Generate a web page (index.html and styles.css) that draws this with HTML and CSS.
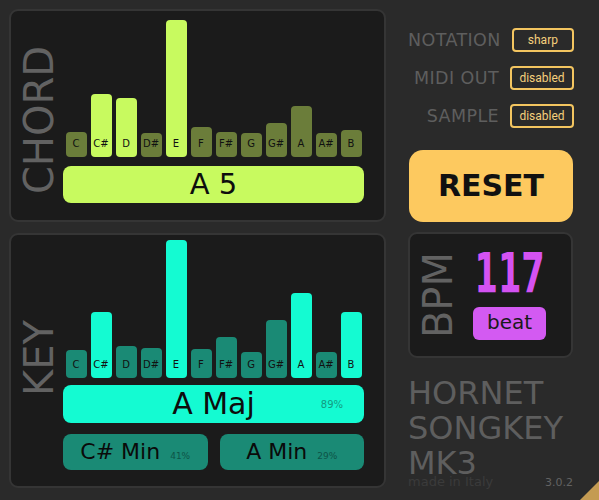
FILE: index.html
```html
<!DOCTYPE html>
<html>
<head>
<meta charset="utf-8">
<link rel="stylesheet" href="styles.css">
</head>
<body>
<div class="app">
  <div class="left">
    <section class="panel chord">
      <div class="side"><span class="vlabel">CHORD</span></div>
      <div class="content">
        <div class="bars">
          <div class="bar off" style="height:25px"><span>C</span></div>
          <div class="bar on" style="height:63px"><span>C#</span></div>
          <div class="bar on" style="height:59px"><span>D</span></div>
          <div class="bar off" style="height:24px"><span>D#</span></div>
          <div class="bar on" style="height:137px"><span>E</span></div>
          <div class="bar off" style="height:30px"><span>F</span></div>
          <div class="bar off" style="height:25px"><span>F#</span></div>
          <div class="bar off" style="height:24px"><span>G</span></div>
          <div class="bar off" style="height:34px"><span>G#</span></div>
          <div class="bar off" style="height:51px"><span>A</span></div>
          <div class="bar off" style="height:24px"><span>A#</span></div>
          <div class="bar off" style="height:27px"><span>B</span></div>
        </div>
        <div class="result chord-result">A 5</div>
      </div>
    </section>
    <section class="panel key">
      <div class="side"><span class="vlabel">KEY</span></div>
      <div class="content">
        <div class="bars">
          <div class="bar off" style="height:28px"><span>C</span></div>
          <div class="bar on" style="height:66px"><span>C#</span></div>
          <div class="bar off" style="height:32px"><span>D</span></div>
          <div class="bar off" style="height:30px"><span>D#</span></div>
          <div class="bar on" style="height:138px"><span>E</span></div>
          <div class="bar off" style="height:29px"><span>F</span></div>
          <div class="bar off" style="height:41px"><span>F#</span></div>
          <div class="bar off" style="height:26px"><span>G</span></div>
          <div class="bar off" style="height:58px"><span>G#</span></div>
          <div class="bar on" style="height:85px"><span>A</span></div>
          <div class="bar off" style="height:26px"><span>A#</span></div>
          <div class="bar on" style="height:66px"><span>B</span></div>
        </div>
        <div class="result key-result">
          <span></span>
          <span class="name">A Maj</span>
          <span class="pct">89%</span>
        </div>
        <div class="alts">
          <div class="alt"><span class="name">C# Min</span><span class="pct">41%</span></div>
          <div class="alt"><span class="name">A Min</span><span class="pct">29%</span></div>
        </div>
      </div>
    </section>
  </div>
  <div class="right">
    <div class="settings">
      <div class="row"><span class="lbl">NOTATION</span><span class="btn">sharp</span></div>
      <div class="row"><span class="lbl">MIDI OUT</span><span class="btn">disabled</span></div>
      <div class="row"><span class="lbl">SAMPLE</span><span class="btn">disabled</span></div>
    </div>
    <div class="reset">RESET</div>
    <div class="bpm">
      <div class="bpm-side"><span class="vlabel">BPM</span></div>
      <div class="bpm-main">
        <div class="tempo">117</div>
        <div class="beat">beat</div>
      </div>
    </div>
    <div class="brand">HORNET<br>SONGKEY<br>MK3</div>
    <div class="foot"><span class="made">made in Italy</span><span class="ver">3.0.2</span></div>
  </div>
</div>
<svg class="grip" width="20" height="20" viewBox="0 0 20 20"><polygon points="20,1 20,20 1,20" fill="#c49b52"/></svg>
</body>
</html>
```

FILE: styles.css
```css
html, body {
  margin: 0;
  padding: 0;
}
body {
  width: 599px;
  height: 500px;
  background: #2a2a2a;
  font-family: "DejaVu Sans", sans-serif;
  overflow: hidden;
  position: relative;
}
.app {
  display: flex;
  padding: 9px 0 0 9px;
  gap: 22px;
}
.left {
  display: flex;
  flex-direction: column;
  gap: 11px;
  width: 377px;
}
.panel {
  box-sizing: border-box;
  background: #1b1b1b;
  border: 2px solid #353535;
  border-radius: 9px;
  display: flex;
}
.chord {
  height: 213px;
  padding: 9px 20px 17px 0;
}
.key {
  height: 255px;
  padding: 5px 20px 16px 0;
}
.side {
  width: 47px;
  padding-left: 5px;
  display: flex;
  align-items: center;
  justify-content: center;
}
.chord .side {
  padding-top: 18px;
}
.key .side {
  padding-top: 6px;
}
.vlabel {
  writing-mode: vertical-rl;
  transform: rotate(180deg);
  font-size: 40px;
  line-height: 29px;
  color: #626262;
}
.content {
  width: 301px;
  display: flex;
  flex-direction: column;
}
.bars {
  display: flex;
  justify-content: center;
  align-items: flex-end;
  gap: 4px;
}
.chord .bars { height: 137px; }
.key .bars { height: 138px; }
.bar {
  width: 21px;
  border-radius: 4px;
  box-sizing: border-box;
  display: flex;
  align-items: flex-end;
  justify-content: center;
  padding-bottom: 7px;
  font-size: 10px;
  line-height: 12px;
  color: #111;
  white-space: nowrap;
}
.chord .on { background: #c8fa5f; }
.chord .off { background: #6b7d3a; }
.key .on { background: #14fbd2; }
.key .off { background: #1a8a75; }
.result {
  border-radius: 8px;
  color: #0d0d0d;
}
.chord-result {
  margin-top: 9px;
  height: 37px;
  background: #c8fa5f;
  font-size: 29px;
  line-height: 37px;
  text-align: center;
}
.key-result {
  margin-top: 7px;
  height: 38px;
  background: #14fbd2;
  display: grid;
  grid-template-columns: 1fr auto 1fr;
  align-items: center;
}
.key-result .name {
  font-size: 30px;
  line-height: 38px;
}
.key-result .pct {
  justify-self: end;
  margin-right: 21px;
  font-size: 10px;
  color: #129a80;
}
.alts {
  margin-top: 11px;
  display: flex;
  gap: 12px;
}
.alt {
  flex: 1;
  height: 36px;
  background: #1a8a75;
  border-radius: 8px;
  display: flex;
  align-items: baseline;
  justify-content: center;
  gap: 10px;
  line-height: 36px;
}
.alt .name {
  font-size: 22px;
  color: #0a0a0a;
}
.alt .pct {
  font-size: 9px;
  color: #0d5447;
}
.right {
  width: 166px;
  display: flex;
  flex-direction: column;
}
.settings {
  margin-top: 19px;
  display: flex;
  flex-direction: column;
  gap: 14px;
}
.row {
  display: flex;
  justify-content: flex-end;
  align-items: center;
  gap: 11px;
}
.lbl {
  font-size: 17.5px;
  color: #5e5e5e;
  letter-spacing: 0.4px;
}
.btn {
  box-sizing: border-box;
  width: 64px;
  height: 24px;
  border: 2px solid #f3c560;
  border-radius: 4px;
  color: #f5d07c;
  font-family: Roboto, sans-serif;
  font-size: 12px;
  line-height: 20px;
  text-align: center;
}
.reset {
  margin: 22px 1px 0 1px;
  height: 72px;
  background: #fdc95f;
  border-radius: 14px;
  font-size: 30px;
  font-weight: bold;
  line-height: 72px;
  text-align: center;
  color: #111;
}
.bpm {
  box-sizing: border-box;
  margin-top: 10px;
  width: 165px;
  height: 126px;
  background: #1b1b1b;
  border: 2px solid #353535;
  border-radius: 9px;
  display: flex;
  padding: 0 5px 0 14px;
}
.bpm-side {
  display: flex;
  align-items: center;
}
.bpm-main {
  flex: 1;
  display: flex;
  flex-direction: column;
  align-items: center;
  justify-content: center;
  padding-bottom: 6px;
}
.tempo {
  font-family: "DejaVu Sans Condensed", "DejaVu Sans", sans-serif;
  font-weight: bold;
  font-size: 55px;
  line-height: 56px;
  color: #d452f2;
  transform: scaleX(0.68);
}
.beat {
  margin-top: 6px;
  width: 73px;
  height: 33px;
  background: #d35af2;
  border-radius: 6px;
  font-size: 20px;
  line-height: 31px;
  text-align: center;
  color: #1a1a1a;
}
.brand {
  margin-top: 18px;
  font-size: 32px;
  line-height: 35px;
  color: #5e5e5e;
}
.foot {
  margin-top: -6px;
  display: flex;
  justify-content: space-between;
  align-items: baseline;
  padding-right: 1px;
}
.made {
  font-size: 13px;
  line-height: 14px;
  color: #3b3b3b;
}
.ver {
  font-size: 11px;
  color: #626262;
}
.grip {
  position: absolute;
  right: 0;
  bottom: 0;
}
```
